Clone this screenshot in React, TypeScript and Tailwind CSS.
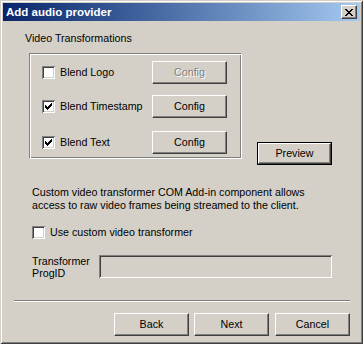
const font = "font-['Liberation_Sans',Arial,sans-serif]"

const tick = [
  [6, 0], [5, 1], [6, 1], [0, 2], [4, 2], [5, 2], [6, 2],
  [0, 3], [1, 3], [3, 3], [4, 3], [5, 3],
  [0, 4], [1, 4], [2, 4], [3, 4], [4, 4],
  [1, 5], [2, 5], [3, 5], [2, 6],
]

function CheckBox({ checked }: { checked?: boolean }) {
  return (
    <span className="relative block h-[13px] w-[13px] shrink-0 bg-white shadow-[inset_1px_1px_0_#808080,inset_-1px_-1px_0_#ffffff,inset_2px_2px_0_#404040,inset_-2px_-2px_0_#d4d0c8]">
      {checked && (
        <svg width="7" height="7" className="absolute left-[3px] top-[3px]" shapeRendering="crispEdges">
          {tick.map(([x, y]) => (
            <rect key={`${x}-${y}`} x={x} y={y} width="1" height="1" fill="#000" />
          ))}
        </svg>
      )}
    </span>
  )
}

function Button({ label, disabled, className = '' }: { label: string; disabled?: boolean; className?: string }) {
  return (
    <div
      className={`flex h-[23px] w-[75px] shrink-0 items-center justify-center border border-t-white border-l-white border-r-[#404040] border-b-[#404040] bg-[#d4d0c8] shadow-[inset_-1px_-1px_0_#808080] ${
        disabled ? 'text-[#808080] [text-shadow:1px_1px_0_#fff]' : 'text-black'
      } ${className}`}
    >
      {label}
    </div>
  )
}

function DefaultButton({ label, className = '' }: { label: string; className?: string }) {
  return (
    <div className={`h-[23px] w-[75px] shrink-0 border border-black ${className}`}>
      <div className="flex h-full w-full items-center justify-center border border-t-white border-l-white border-r-[#404040] border-b-[#404040] shadow-[inset_-1px_-1px_0_#808080]">
        {label}
      </div>
    </div>
  )
}

function Row({ label, checked, disabled, className = '' }: { label: string; checked?: boolean; disabled?: boolean; className?: string }) {
  return (
    <div className={`flex items-center ${className}`}>
      <div className="flex w-[110px] items-center gap-[5px]">
        <CheckBox checked={checked} />
        <span>{label}</span>
      </div>
      <Button label="Config" disabled={disabled} />
    </div>
  )
}

export default function App() {
  return (
    <div
      className={`h-[344px] w-[363px] overflow-hidden bg-[#d4d0c8] text-[10.7px] leading-[13px] text-black shadow-[inset_1px_1px_0_#d4d0c8,inset_-1px_-1px_0_#404040,inset_2px_2px_0_#ffffff,inset_-2px_-2px_0_#808080] ${font}`}
    >
      {/* title bar */}
      <div className="mx-[3px] mt-[3px] flex h-[18px] items-center justify-between bg-gradient-to-r from-[#0a246a] to-[#a6caf0] pl-[3px] pr-[3px]">
        <span className="text-[11.5px] font-bold text-white">Add audio provider</span>
        <div className="flex h-[14px] w-[16px] items-center justify-center border border-t-white border-l-white border-r-[#404040] border-b-[#404040] bg-[#d4d0c8] shadow-[inset_-1px_-1px_0_#808080]">
          <svg width="8" height="7" shapeRendering="crispEdges">
            <path d="M0 0h2v1H0zM6 0h2v1H6zM1 1h2v1H1zM5 1h2v1H5zM2 2h4v1H2zM3 3h2v1H3zM2 4h4v1H2zM1 5h2v1H1zM5 5h2v1H5zM0 6h2v1H0zM6 6h2v1H6z" fill="#000" />
          </svg>
        </div>
      </div>

      <div className="ml-[25px] mt-[11px]">Video Transformations</div>

      <div className="mt-[8px] flex items-start">
        <div className="ml-[29px] h-[106px] w-[213px] border border-t-[#808080] border-l-[#808080] border-r-white border-b-white pl-[12px] pt-[7px] shadow-[inset_1px_1px_0_#fff,inset_-1px_-1px_0_#808080]">
          <Row label="Blend Logo" disabled />
          <Row label="Blend Timestamp" checked className="mt-[11px]" />
          <Row label="Blend Text" checked className="mt-[13px]" />
        </div>
        <DefaultButton label="Preview" className="ml-[15px] mt-[89px]" />
      </div>

      <p className="ml-[32px] mt-[21px]">
        Custom video transformer COM Add-in component allows
        <br />
        access to raw video frames being streamed to the client.
      </p>

      <div className="ml-[32px] mt-[14px] flex items-center gap-[5px]">
        <CheckBox />
        <span>Use custom video transformer</span>
      </div>

      <div className="ml-[32px] mt-[16px] flex items-start">
        <div className="w-[67px] leading-[12px]">
          Transformer
          <br />
          ProgID
        </div>
        <div className="h-[23px] w-[233px] bg-[#d4d0c8] shadow-[inset_1px_1px_0_#808080,inset_-1px_-1px_0_#ffffff,inset_2px_2px_0_#404040,inset_-2px_-2px_0_#d4d0c8]" />
      </div>

      <div className="ml-[14px] mt-[21px] h-[2px] w-[336px] border-t border-b border-t-[#808080] border-b-white" />

      <div className="mt-[11px] flex">
        <Button label="Back" className="ml-[114px]" />
        <Button label="Next" className="ml-[5px]" />
        <Button label="Cancel" className="ml-[6px]" />
      </div>
    </div>
  )
}
